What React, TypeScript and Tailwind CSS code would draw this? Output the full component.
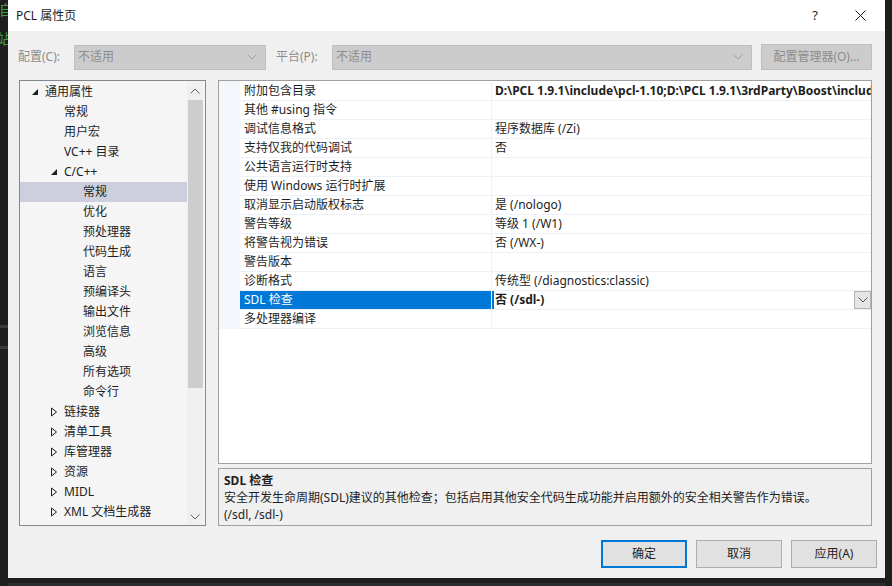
import type { ReactNode } from "react";

const font = "font-['Segoe_UI','Noto_Sans','Noto_Sans_CJK_SC',sans-serif]";

type TreeItem = { label: string; level: number; icon?: "open" | "closed"; selected?: boolean };

const treeItems: TreeItem[] = [
    { label: "通用属性", level: 0, icon: "open" },
    { label: "常规", level: 1 },
    { label: "用户宏", level: 1 },
    { label: "VC++ 目录", level: 1 },
    { label: "C/C++", level: 1, icon: "open" },
    { label: "常规", level: 2, selected: true },
    { label: "优化", level: 2 },
    { label: "预处理器", level: 2 },
    { label: "代码生成", level: 2 },
    { label: "语言", level: 2 },
    { label: "预编译头", level: 2 },
    { label: "输出文件", level: 2 },
    { label: "浏览信息", level: 2 },
    { label: "高级", level: 2 },
    { label: "所有选项", level: 2 },
    { label: "命令行", level: 2 },
    { label: "链接器", level: 1, icon: "closed" },
    { label: "清单工具", level: 1, icon: "closed" },
    { label: "库管理器", level: 1, icon: "closed" },
    { label: "资源", level: 1, icon: "closed" },
    { label: "MIDL", level: 1, icon: "closed" },
    { label: "XML 文档生成器", level: 1, icon: "closed" }
];

type Prop = { name: string; value?: string; bold?: boolean; selected?: boolean };

const props: Prop[] = [
    { name: "附加包含目录", value: "D:\\PCL 1.9.1\\include\\pcl-1.10;D:\\PCL 1.9.1\\3rdParty\\Boost\\include\\boost-1_72;D:\\PCL", bold: true },
    { name: "其他 #using 指令" },
    { name: "调试信息格式", value: "程序数据库 (/Zi)" },
    { name: "支持仅我的代码调试", value: "否" },
    { name: "公共语言运行时支持" },
    { name: "使用 Windows 运行时扩展" },
    { name: "取消显示启动版权标志", value: "是 (/nologo)" },
    { name: "警告等级", value: "等级 1 (/W1)" },
    { name: "将警告视为错误", value: "否 (/WX-)" },
    { name: "警告版本" },
    { name: "诊断格式", value: "传统型 (/diagnostics:classic)" },
    { name: "SDL 检查", value: "否 (/sdl-)", bold: true, selected: true },
    { name: "多处理器编译" }
];

const levelPad = ["pl-[11px]", "pl-[30px]", "pl-[49px]"];

function Chevron({ className }: { className?: string }) {
    return (
        <svg width="10" height="6" viewBox="0 0 10 6" className={className}>
            <path d="M0.5 0.5 L5 5 L9.5 0.5" fill="none" stroke="currentColor" strokeWidth="1" />
        </svg>
    );
}

function TreeIcon({ kind }: { kind?: "open" | "closed" }) {
    if (kind === "open")
        return (
            <svg width="8" height="8" viewBox="0 0 8 8">
                <path d="M7 1 L7 7 L1 7 Z" fill="#1e1e1e" />
            </svg>
        );
    if (kind === "closed")
        return (
            <svg width="8" height="10" viewBox="0 0 8 10">
                <path d="M1.5 1 L6.5 5 L1.5 9 Z" fill="none" stroke="#1e1e1e" strokeWidth="1" />
            </svg>
        );
    return null;
}

function Select({ width }: { width: string }) {
    return (
        <div className={`${width} shrink-0 h-[25px] bg-[#cccccc] border border-[#bfbfbf] flex items-center justify-between pl-[3px] pr-[8px] text-[#8c8c8c]`}>
            <span>不适用</span>
            <Chevron className="text-[#a0a0a0]" />
        </div>
    );
}

function Button({ children, primary }: { children: ReactNode; primary?: boolean }) {
    return (
        <div
            className={`h-[28px] w-[86px] flex items-center justify-center bg-[#e1e1e1] ${
                primary ? "border-2 border-[#0078d7]" : "border border-[#adadad]"
            }`}
        >
            {children}
        </div>
    );
}

export default function App() {
    return (
        <div className={`w-[892px] h-[586px] bg-[#1e1e1e] flex overflow-hidden text-[12px] leading-none text-[#1e1e1e] ${font}`}>
            <div className="w-[8px] shrink-0 flex flex-col text-[#3f9b3f] text-[14px] overflow-hidden">
                <div className="h-[22px] pt-[3px] -ml-[1px]">自</div>
                <div className="h-[30px] pt-[10px] -ml-[3px]">站</div>
                <div className="mt-[273px] h-[3px] bg-[#3a3a3a]" />
                <div className="mt-[18px] h-[3px] bg-[#3a3a3a]" />
            </div>
            <div className="w-[877px] shrink-0 flex flex-col">
                <div className="h-[578px] bg-[#f0f0f0] flex flex-col">
                    {/* title bar */}
                    <div className="h-[31px] bg-white flex items-center pl-[8px] pr-[19px] text-[12px]">
                        <span className="flex-1">PCL 属性页</span>
                        <span className="text-[13px] mr-[37px]">?</span>
                        <svg width="11" height="11" viewBox="0 0 11 11">
                            <path d="M0.5 0.5 L10.5 10.5 M10.5 0.5 L0.5 10.5" stroke="#1e1e1e" strokeWidth="1" />
                        </svg>
                    </div>

                    {/* config row */}
                    <div className="mt-[13px] h-[26px] flex items-center pl-[10px] pr-[13px] text-[#8c8c8c]">
                        <span className="w-[56px] shrink-0">配置(C):</span>
                        <Select width="w-[192px]" />
                        <span className="ml-[10px] w-[56px] shrink-0">平台(P):</span>
                        <Select width="w-[420px]" />
                        <div className="ml-auto w-[111px] h-[26px] bg-[#cccccc] border border-[#bfbfbf] flex items-center justify-center">
                            配置管理器(O)...
                        </div>
                    </div>

                    {/* main area */}
                    <div className="mt-[10px] flex pl-[11px] pr-[13px] gap-[12px]">
                        {/* tree */}
                        <div className="w-[187px] shrink-0 h-[446px] border border-[#828790] bg-[#f5f5f5] flex">
                            <div className="flex-1 pt-[1px] flex flex-col whitespace-nowrap">
                                {treeItems.map((item, i) => (
                                    <div
                                        key={i}
                                        className={`h-[20px] flex items-center ${levelPad[item.level]} ${
                                            item.selected ? "bg-[#cdd0dc]" : ""
                                        }`}
                                    >
                                        <span className="w-[14px] flex items-center">
                                            <TreeIcon kind={item.icon} />
                                        </span>
                                        <span>{item.label}</span>
                                    </div>
                                ))}
                            </div>
                            <div className="w-[16px] mr-[2px] flex flex-col items-center bg-[#f0f0f0]">
                                <div className="h-[19px] flex items-center justify-center">
                                    <Chevron className="rotate-180 text-[#606060]" />
                                </div>
                                <div className="w-[15px] h-[288px] bg-[#cdcdcd]" />
                                <div className="flex-1" />
                                <div className="h-[17px] flex items-center justify-center">
                                    <Chevron className="text-[#606060]" />
                                </div>
                            </div>
                        </div>

                        {/* grid + description */}
                        <div className="flex-1 min-w-0 flex flex-col gap-[4px]">
                            <div className="h-[384px] border border-[#a0a0a0] bg-white flex overflow-hidden">
                                <div className="w-[21px] shrink-0 flex flex-col">
                                    <div className="h-[248px] bg-[#f3f6fb]" />
                                </div>
                                <div className="flex-1 flex flex-col pt-[1px] min-w-0">
                                    {props.map((p, i) => (
                                        <div key={i} className="h-[19px] flex border-b border-[#eef2f8] shrink-0">
                                            <div
                                                className={`w-[252px] shrink-0 flex items-center pl-[4px] border-r border-[#eef2f8] ${
                                                    p.selected ? "bg-[#0078d7] text-white" : ""
                                                }`}
                                            >
                                                {p.name}
                                            </div>
                                            <div
                                                className={`flex-1 min-w-0 flex items-center whitespace-nowrap overflow-hidden ${
                                                    p.bold ? "font-bold" : ""
                                                } ${p.selected ? "border-l-2 border-[#0078d7] pl-[1px]" : "pl-[3px]"}`}
                                            >
                                                <span className="flex-1 min-w-0 overflow-hidden leading-[16px]">{p.value}</span>
                                                {p.selected && (
                                                    <div className="w-[17px] h-[18px] shrink-0 bg-[#e5e5e5] border border-[#b4b4b4] flex items-center justify-center">
                                                        <Chevron className="text-[#555555]" />
                                                    </div>
                                                )}
                                            </div>
                                        </div>
                                    ))}
                                </div>
                            </div>
                            <div className="h-[58px] border border-[#a0a0a0] bg-[#f0f0f0] pl-[5px] pt-[6px] flex flex-col gap-[5px]">
                                <div className="font-bold">SDL 检查</div>
                                <div>安全开发生命周期(SDL)建议的其他检查；包括启用其他安全代码生成功能并启用额外的安全相关警告作为错误。</div>
                                <div>(/sdl, /sdl-)</div>
                            </div>
                        </div>
                    </div>

                    {/* buttons */}
                    <div className="mt-[14px] flex justify-end gap-[9px] pr-[8px]">
                        <Button primary>确定</Button>
                        <Button>取消</Button>
                        <Button>应用(A)</Button>
                    </div>
                </div>
                <div className="h-[5px]" />
                <div className="flex-1 bg-[#2d2d30]" />
            </div>
            <div className="flex-1 bg-[#1e1e1e]" />
        </div>
    );
}
